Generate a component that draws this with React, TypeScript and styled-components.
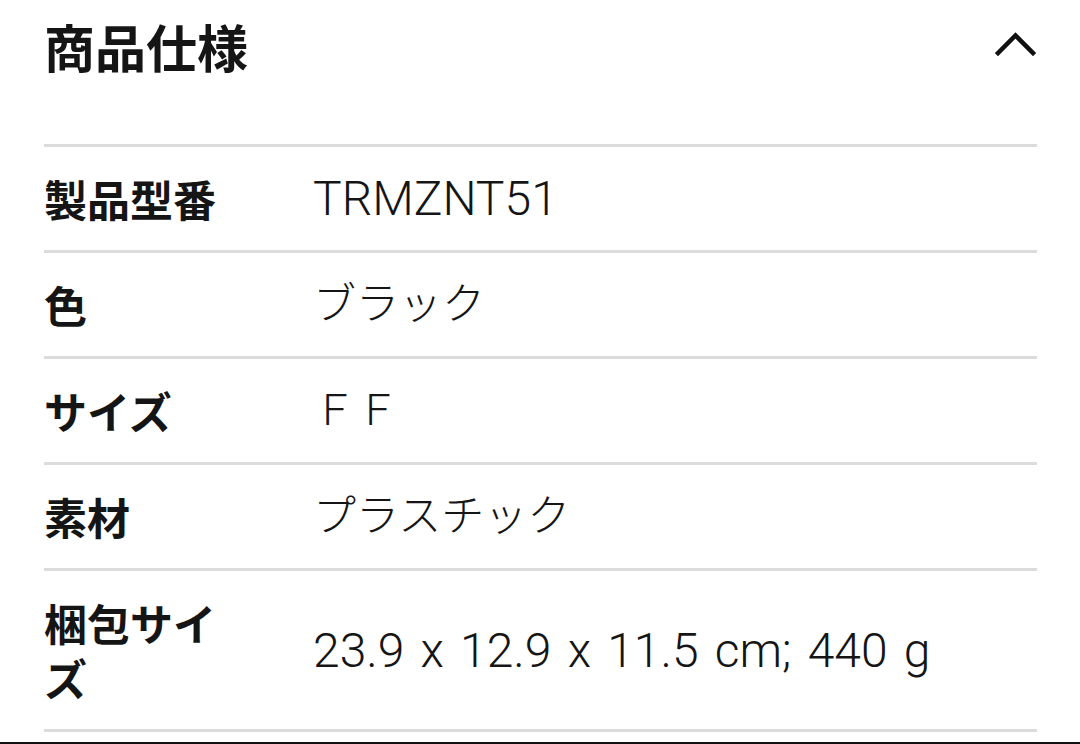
import React from "react";
import styled, { createGlobalStyle } from "styled-components";

const GlobalStyle = createGlobalStyle`
  html, body {
    margin: 0;
    padding: 0;
    background: #ffffff;
  }
  * { box-sizing: border-box; }
`;

const Page = styled.div`
  width: 1080px;
  height: 744px;
  background: #ffffff;
  padding: 0 43px 0 44px;
  display: flex;
  flex-direction: column;
  border-bottom: 2px solid #111111;
  overflow: hidden;
`;

const Header = styled.div`
  height: 144px;
  display: flex;
  align-items: flex-start;
  justify-content: space-between;
  padding-top: 10px;
`;

const Title = styled.h2`
  margin: 0;
  font-family: "Noto Sans CJK JP", sans-serif;
  font-weight: 700;
  font-size: 51px;
  line-height: 72px;
  color: #151515;
`;

const Toggle = styled.button`
  border: none;
  background: transparent;
  padding: 0;
  margin-top: 20px;
  width: 44px;
  height: 30px;
  display: flex;
  align-items: center;
  justify-content: flex-end;
  cursor: pointer;
`;

const Table = styled.div`
  display: flex;
  flex-direction: column;
  border-bottom: 3px solid #dcdcdc;
`;

const Row = styled.div`
  display: grid;
  grid-template-columns: 180px 1fr;
  column-gap: 89px;
  align-items: center;
  border-top: 3px solid #dcdcdc;
  padding: 24px 0;
`;

const Label = styled.div`
  font-family: "Noto Sans CJK JP", sans-serif;
  font-weight: 700;
  font-size: 43px;
  line-height: 55px;
  color: #151515;
`;

const Value = styled.div<{ $cjk?: boolean }>`
  font-family: Roboto, "Noto Sans CJK JP", sans-serif;
  font-weight: 300;
  font-size: ${(p) => (p.$cjk ? "43px" : "48px")};
  line-height: 55px;
  word-spacing: 4.5px;
  color: #151515;
  white-space: nowrap;
`;

const rows: { label: string; value: string; cjk?: boolean }[] = [
  { label: "製品型番", value: "TRMZNT51" },
  { label: "色", value: "ブラック", cjk: true },
  { label: "サイズ", value: "ＦＦ", cjk: true },
  { label: "素材", value: "プラスチック", cjk: true },
  { label: "梱包サイズ", value: "23.9 x 12.9 x 11.5 cm; 440 g" },
];

const ChevronUp = () => (
  <svg width="44" height="28" viewBox="0 0 44 28" fill="none">
    <polyline
      points="5,22 22.5,4.5 40,22"
      stroke="#111111"
      strokeWidth="4.5"
      strokeLinecap="square"
      strokeLinejoin="miter"
    />
  </svg>
);

export default function App() {
  return (
    <>
      <GlobalStyle />
      <Page>
        <Header>
          <Title>商品仕様</Title>
          <Toggle aria-label="閉じる">
            <ChevronUp />
          </Toggle>
        </Header>
        <Table>
          {rows.map((r) => (
            <Row key={r.label}>
              <Label>{r.label}</Label>
              <Value $cjk={r.cjk}>{r.value}</Value>
            </Row>
          ))}
        </Table>
      </Page>
    </>
  );
}
